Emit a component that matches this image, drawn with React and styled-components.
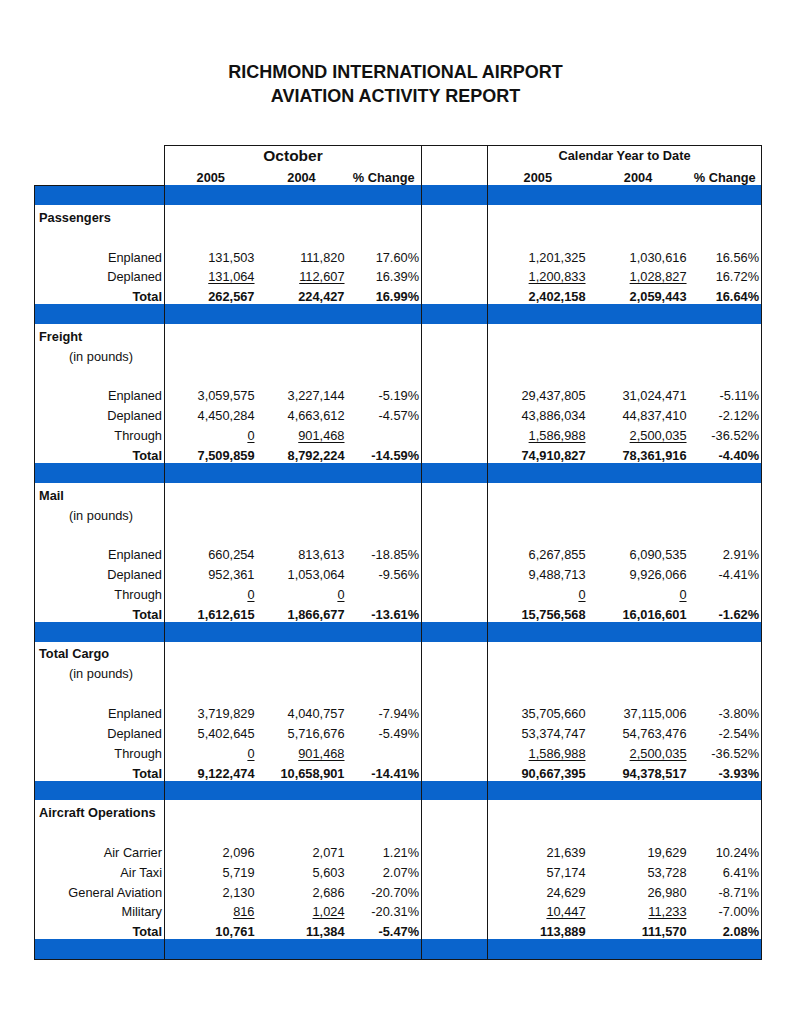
import styled, { createGlobalStyle } from "styled-components"

const GlobalStyle = createGlobalStyle`
  body {
    margin: 0;
    background: #ffffff;
  }
`

const line = "1px solid #161616"
const blue = "#0a64cc"

const Page = styled.div`
  width: 791px;
  min-height: 1024px;
  padding-top: 60px;
  box-sizing: border-box;
  font-family: "Liberation Sans", Arial, sans-serif;
  color: #111;
`

const Title = styled.h1`
  margin: 0;
  text-align: center;
  font-size: 18px;
  line-height: 24px;
  font-weight: 700;
`

const Sheet = styled.table`
  margin: 37px 0 0 34px;
  width: 727px;
  border-collapse: collapse;
  table-layout: fixed;
  font-size: 12.8px;
`

const Td = styled.td`
  box-sizing: border-box;
  height: 19.85px;
  padding: 0 2px;
  vertical-align: bottom;
  line-height: 14px;
  white-space: nowrap;
  text-align: ${(p) => p.$align || "right"};
  font-weight: ${(p) => (p.$bold ? 700 : 400)};
  border-left: ${(p) => (p.$bl ? line : "none")};
  border-right: ${(p) => (p.$br ? line : "none")};
  border-top: ${(p) => (p.$bt ? line : "none")};
  border-bottom: ${(p) => (p.$bb ? line : "none")};
  background: ${(p) => (p.$blue ? blue : "transparent")};
`

const GroupHead = styled(Td)`
  text-align: center;
  vertical-align: ${(p) => (p.$middle ? "middle" : "bottom")};
  font-weight: 700;
  font-size: ${(p) => p.$size || "12.8px"};
`

const LabelCell = styled(Td)`
  padding-left: ${(p) => p.$indent || 4}px;
`

const Value = styled.span`
  text-decoration: ${(p) => (p.$under ? "underline" : "none")};
  text-underline-offset: 2px;
  text-decoration-thickness: 1px;
`

const sections = [
  {
    title: "Passengers",
    rows: [
      ["Enplaned", ["131,503", "111,820", "17.60%"], ["1,201,325", "1,030,616", "16.56%"]],
      ["Deplaned", ["_131,064", "_112,607", "16.39%"], ["_1,200,833", "_1,028,827", "16.72%"]],
    ],
    total: [["262,567", "224,427", "16.99%"], ["2,402,158", "2,059,443", "16.64%"]],
  },
  {
    title: "Freight",
    pounds: true,
    rows: [
      ["Enplaned", ["3,059,575", "3,227,144", "-5.19%"], ["29,437,805", "31,024,471", "-5.11%"]],
      ["Deplaned", ["4,450,284", "4,663,612", "-4.57%"], ["43,886,034", "44,837,410", "-2.12%"]],
      ["Through", ["_0", "_901,468", ""], ["_1,586,988", "_2,500,035", "-36.52%"]],
    ],
    total: [["7,509,859", "8,792,224", "-14.59%"], ["74,910,827", "78,361,916", "-4.40%"]],
  },
  {
    title: "Mail",
    pounds: true,
    rows: [
      ["Enplaned", ["660,254", "813,613", "-18.85%"], ["6,267,855", "6,090,535", "2.91%"]],
      ["Deplaned", ["952,361", "1,053,064", "-9.56%"], ["9,488,713", "9,926,066", "-4.41%"]],
      ["Through", ["_0", "_0", ""], ["_0", "_0", ""]],
    ],
    total: [["1,612,615", "1,866,677", "-13.61%"], ["15,756,568", "16,016,601", "-1.62%"]],
  },
  {
    title: "Total Cargo",
    pounds: true,
    rows: [
      ["Enplaned", ["3,719,829", "4,040,757", "-7.94%"], ["35,705,660", "37,115,006", "-3.80%"]],
      ["Deplaned", ["5,402,645", "5,716,676", "-5.49%"], ["53,374,747", "54,763,476", "-2.54%"]],
      ["Through", ["_0", "_901,468", ""], ["_1,586,988", "_2,500,035", "-36.52%"]],
    ],
    total: [["9,122,474", "10,658,901", "-14.41%"], ["90,667,395", "94,378,517", "-3.93%"]],
  },
  {
    title: "Aircraft Operations",
    rows: [
      ["Air Carrier", ["2,096", "2,071", "1.21%"], ["21,639", "19,629", "10.24%"]],
      ["Air Taxi", ["5,719", "5,603", "2.07%"], ["57,174", "53,728", "6.41%"]],
      ["General Aviation", ["2,130", "2,686", "-20.70%"], ["24,629", "26,980", "-8.71%"]],
      ["Military", ["_816", "_1,024", "-20.31%"], ["_10,447", "_11,233", "-7.00%"]],
    ],
    total: [["10,761", "11,384", "-5.47%"], ["113,889", "111,570", "2.08%"]],
  },
]

function Cells({ oct = ["", "", ""], ytd = ["", "", ""], bold, blue: isBlue, last }) {
  const cell = (v, i, edge) => {
    const under = v.startsWith("_")
    return (
      <Td key={i} $bold={bold} $blue={isBlue} $bb={last} {...edge}>
        <Value $under={under}>{under ? v.slice(1) : v}</Value>
      </Td>
    )
  }
  return (
    <>
      {oct.map((v, i) => cell(v, "o" + i, i === 0 ? { $bl: true } : {}))}
      <Td $bl $br $blue={isBlue} $bb={last} />
      {ytd.map((v, i) => cell(v, "y" + i, i === 2 ? { $br: true } : {}))}
    </>
  )
}

function BlueRow({ first, last }) {
  return (
    <tr>
      <LabelCell $bl $blue $bt={first} $bb={last} />
      <Cells blue last={last} />
    </tr>
  )
}

function Section({ data, last }) {
  return (
    <>
      <tr>
        <LabelCell $bl $align="left" $bold>
          {data.title}
        </LabelCell>
        <Cells />
      </tr>
      {data.pounds && (
        <tr>
          <LabelCell $bl $align="left" $indent={34}>
            (in pounds)
          </LabelCell>
          <Cells />
        </tr>
      )}
      <tr>
        <LabelCell $bl />
        <Cells />
      </tr>
      {data.rows.map(([label, oct, ytd]) => (
        <tr key={label}>
          <LabelCell $bl>{label}</LabelCell>
          <Cells oct={oct} ytd={ytd} />
        </tr>
      ))}
      <tr>
        <LabelCell $bl $bold>
          Total
        </LabelCell>
        <Cells oct={data.total[0]} ytd={data.total[1]} bold />
      </tr>
      <BlueRow last={last} />
    </>
  )
}

export default function App() {
  return (
    <Page>
      <GlobalStyle />
      <Title>
        RICHMOND INTERNATIONAL AIRPORT
        <br />
        AVIATION ACTIVITY REPORT
      </Title>
      <Sheet>
        <colgroup>
          <col style={{ width: 130 }} />
          <col style={{ width: 92 }} />
          <col style={{ width: 90 }} />
          <col style={{ width: 75 }} />
          <col style={{ width: 66 }} />
          <col style={{ width: 100 }} />
          <col style={{ width: 101 }} />
          <col style={{ width: 73 }} />
        </colgroup>
        <tbody>
          <tr>
            <Td />
            <GroupHead colSpan={3} $bl $bt $middle $size="15.5px">
              October
            </GroupHead>
            <Td $bl $br $bt />
            <GroupHead colSpan={3} $br $bt $middle>
              Calendar Year to Date
            </GroupHead>
          </tr>
          <tr>
            <Td />
            <GroupHead $bl>2005</GroupHead>
            <GroupHead>2004</GroupHead>
            <GroupHead>% Change</GroupHead>
            <Td $bl $br />
            <GroupHead>2005</GroupHead>
            <GroupHead>2004</GroupHead>
            <GroupHead $br>% Change</GroupHead>
          </tr>
          <BlueRow first />
          {sections.map((s, i) => (
            <Section key={s.title} data={s} last={i === sections.length - 1} />
          ))}
        </tbody>
      </Sheet>
    </Page>
  )
}
